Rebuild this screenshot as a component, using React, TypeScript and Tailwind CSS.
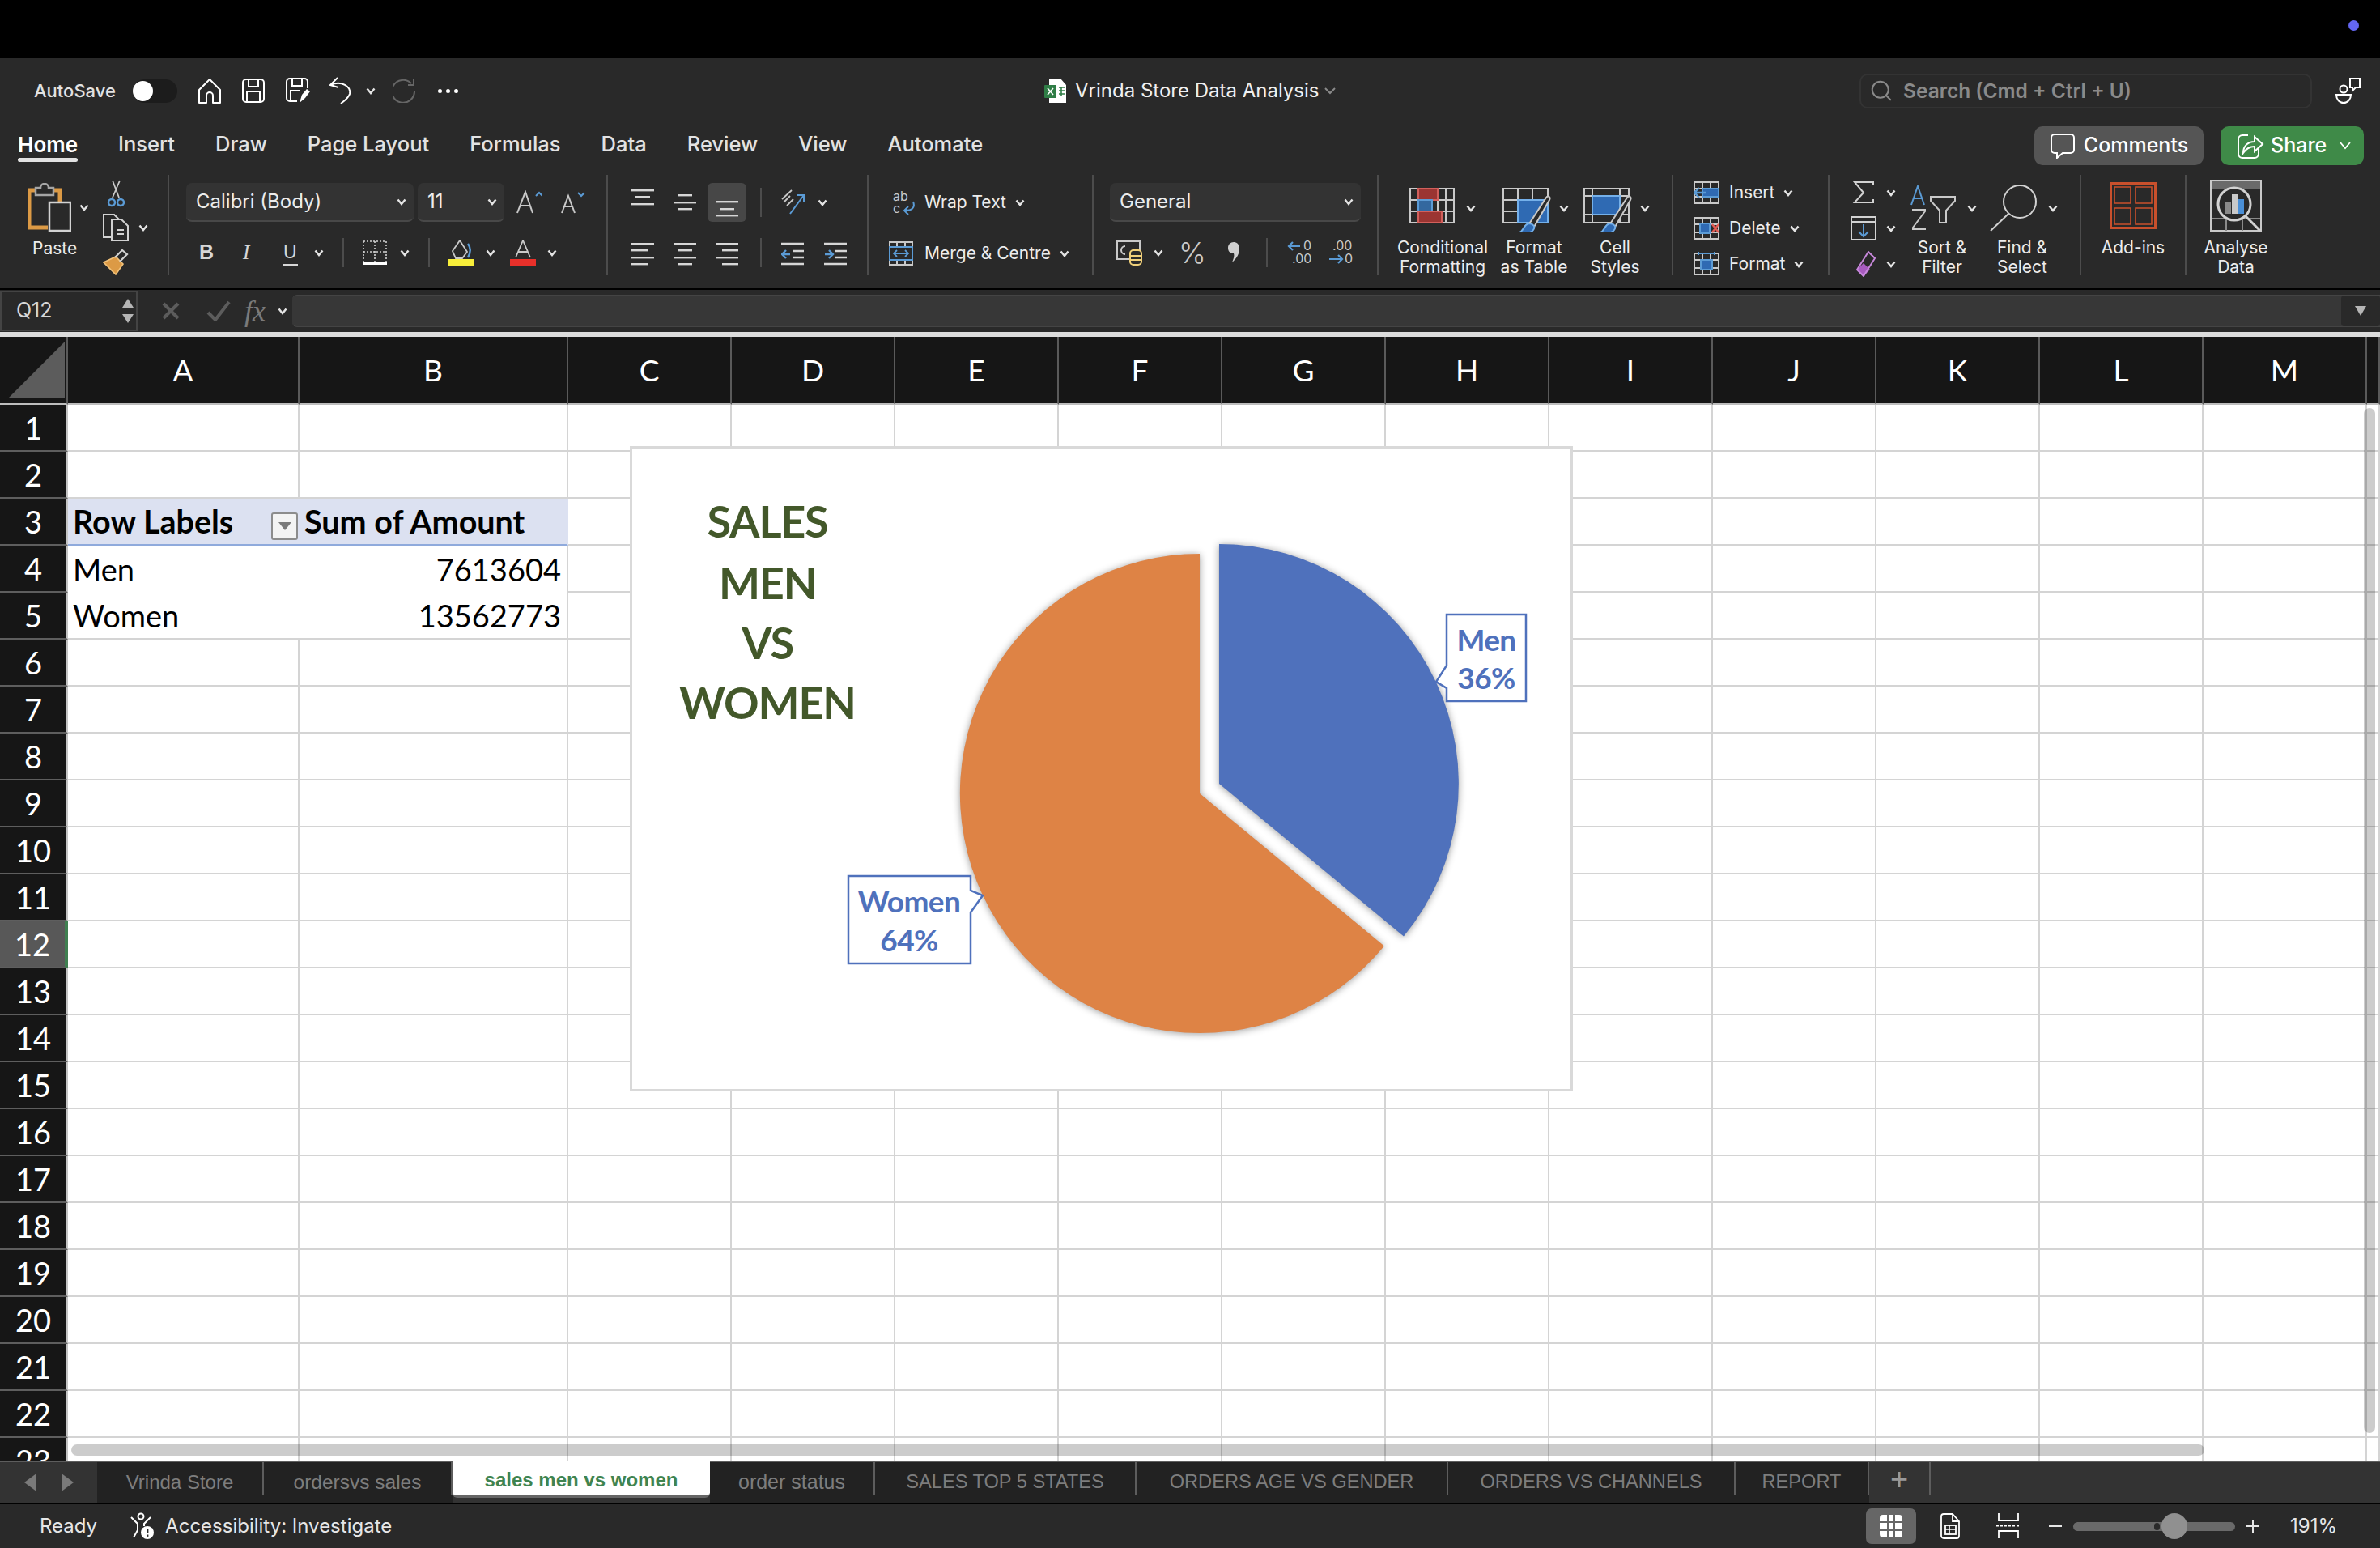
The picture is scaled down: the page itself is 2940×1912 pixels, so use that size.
import React from "react";
import { Search } from "lucide-react";

const COLUMNS = ["A", "B", "C", "D", "E", "F", "G", "H", "I", "J", "K", "L", "M", ""];
const ROWS = Array.from({ length: 23 }, (_, i) => i + 1);

const SHEET_TABS = [
  { name: "Vrinda Store", width: "w-[206px]", size: "text-[24px]" },
  { name: "ordersvs sales", width: "w-[233px]", size: "text-[24.5px]" },
  { name: "sales men vs women", width: "w-[318px]", size: "text-[24px]", active: true },
  { name: "order status", width: "w-[204px]", size: "text-[25px]" },
  { name: "SALES TOP 5 STATES", width: "w-[323px]", size: "text-[23.6px]" },
  { name: "ORDERS AGE VS GENDER", width: "w-[385px]", size: "text-[23.6px]" },
  { name: "ORDERS VS CHANNELS", width: "w-[355px]", size: "text-[23.6px]" },
  { name: "REPORT", width: "w-[165px]", size: "text-[23.6px]" },
];

const RIBBON_TABS = ["Insert", "Draw", "Page Layout", "Formulas", "Data", "Review", "View", "Automate"];

// ── small ribbon helpers ──

function Chev({ className = "" }: { className?: string }) {
  return (
    <svg width="12" height="9" viewBox="0 0 12 9" className={`shrink-0 ${className}`}>
      <path d="M1.5 1.5 6 7l4.5-5.5" fill="none" stroke="#e4e4e4" strokeWidth="2.4" />
    </svg>
  );
}

function Sep({ className = "" }: { className?: string }) {
  return <div className={`w-[2px] h-[36px] bg-[#4c4c4c] shrink-0 ${className}`} />;
}

function Lines({ ys, lens, align, h, className = "" }: { ys: number[]; lens: number[]; align: "l" | "c" | "r"; h: number; className?: string }) {
  return (
    <svg width="28" height={h} viewBox={`0 0 28 ${h}`} className={`shrink-0 ${className}`}>
      {ys.map((y, i) => {
        const x = align === "l" ? 0 : align === "c" ? (28 - lens[i]) / 2 : 28 - lens[i];
        return <rect key={i} x={x} y={y} width={lens[i]} height="2.4" fill="#d6d6d6" />;
      })}
    </svg>
  );
}

function MiniGrid({ children }: { children: React.ReactNode }) {
  return (
    <svg width="32" height="30" viewBox="0 0 32 30" className="shrink-0">
      <g fill="none" stroke="#c9c9c9" strokeWidth="2">
        <rect x="1" y="2" width="30" height="26" />
        <path d="M11 2v26M21 2v26M1 10h30M1 20h30" />
      </g>
      {children}
    </svg>
  );
}

function Brush() {
  return (
    <g>
      <path d="M32 46 54 12c2-3 6-1 4 3L38 50z" fill="#292929" stroke="#c9c9c9" strokeWidth="2" />
      <path d="M32 44c6 0 9 4 6 8-3 4-10 5-17 3 5-2 5-9 11-11z" fill="#2f6ab3" stroke="#74b0ea" strokeWidth="2" />
    </g>
  );
}

function RibbonLabel({ lines }: { lines: string[] }) {
  return (
    <div className="mt-[8px] text-center text-[21px] leading-[24px] text-[#ececec]">
      {lines.map((l) => (
        <div key={l}>{l}</div>
      ))}
    </div>
  );
}

// ── the pie chart floats over the cells ──

function SalesChart() {
  return (
    <div className="absolute left-[778px] top-[135px] w-[1165px] h-[797px] bg-white border-[3px] border-[#d9d9d9]">
      <svg viewBox="781 554 1159 791" className="w-full h-full block [font-family:Lato,sans-serif] font-bold">
        <g fontSize="54" fill="#43582a" textAnchor="middle" letterSpacing="-1.2">
          <text x="948" y="664">SALES</text>
          <text x="948" y="740">MEN</text>
          <text x="948" y="814">VS</text>
          <text x="948" y="888">WOMEN</text>
        </g>
        <path d="M1482 980 1710 1168.6A296 296 0 1 1 1482 684Z" fill="#de8345" className="drop-shadow-[0_1px_5px_rgba(0,0,0,0.4)]" />
        <path d="M1506 968V672A296 296 0 0 1 1734 1156.6Z" fill="#4f71bc" className="drop-shadow-[0_1px_5px_rgba(0,0,0,0.4)]" />
        <path d="M1787 759H1885V866H1787V850L1774 842 1787 822Z" fill="#fff" stroke="#4f71bc" strokeWidth="2.5" />
        <path d="M1048 1082H1199V1100L1214 1106 1199 1127V1190H1048Z" fill="#fff" stroke="#4f71bc" strokeWidth="2.5" />
        <g fontSize="37" fill="#4f71bc" textAnchor="middle" letterSpacing="-0.6">
          <text x="1836" y="804">Men</text>
          <text x="1836" y="851">36%</text>
          <text x="1123" y="1127">Women</text>
          <text x="1123" y="1175">64%</text>
        </g>
      </svg>
    </div>
  );
}

function Sheet() {
  return (
    <div className="relative h-[1388px] overflow-hidden bg-white [font-family:Lato,sans-serif]">
      <div className="grid grid-cols-[84px_286px_332px_repeat(11,202px)_16px] grid-rows-[84px] auto-rows-[58px]">
        {/* column header row */}
        <div className="bg-[#161616] border-b-[2px] border-[#bdbdbd] border-r-[2px] border-r-[#5a5a5a] flex items-end justify-end pr-[2px] pb-[6px]">
          <div className="w-[70px] h-[70px] bg-[#5c5c5c] [clip-path:polygon(100%_0,100%_100%,0_100%)]" />
        </div>
        {COLUMNS.map((c) => (
          <div key={c} className="bg-[#161616] border-b-[2px] border-[#bdbdbd] border-r-[2px] border-r-[#5a5a5a] flex items-center justify-center text-[37px] text-white">
            {c}
          </div>
        ))}
        {/* data rows */}
        {ROWS.map((r) => (
          <React.Fragment key={r}>
            <div className={`flex items-center justify-center text-[38px] text-white border-b-[2px] border-[#5e5e5e] ${r === 12 ? "bg-[#585858] border-r-[4px] border-r-[#3f7f50]" : "bg-[#161616] border-r-[2px] border-r-[#c4c4c4]"}`}>
              {r}
            </div>
            {COLUMNS.map((c, i) => {
              if (r === 3 && i < 2) {
                return i === 0 ? (
                  <div key={c} className="bg-[#dce1f1] border-b-[2px] border-[#8faadc] flex items-center pl-[6px] text-[39.5px] font-bold text-black">
                    <span className="flex-1">Row Labels</span>
                    <span className="w-[33px] h-[34px] mt-[12px] mr-[2px] bg-[#f3f3f3] border-[2px] border-[#8c8c8c] rounded-[3px] flex items-center justify-center">
                      <span className="w-0 h-0 border-x-[8px] border-x-transparent border-t-[10px] border-t-[#7a7a7a]" />
                    </span>
                  </div>
                ) : (
                  <div key={c} className="bg-[#dce1f1] border-b-[2px] border-r-[2px] border-b-[#8faadc] border-r-[#dce1f1] flex items-center pl-[6px] text-[39.5px] font-bold text-black">
                    Sum of Amount
                  </div>
                );
              }
              if ((r === 4 || r === 5) && i < 2) {
                const val = r === 4 ? ["Men", "7613604"] : ["Women", "13562773"];
                return (
                  <div key={c} className={`flex items-center text-[38px] text-black ${r === 5 ? "border-b-[2px] border-[#d4d4d4]" : ""} ${i === 0 ? "pl-[6px]" : "justify-end pr-[7px] border-r-[2px] border-[#d4d4d4]"}`}>
                    {val[i]}
                  </div>
                );
              }
              return <div key={c} className="border-b-[2px] border-r-[2px] border-[#d4d4d4]" />;
            })}
          </React.Fragment>
        ))}
      </div>

      <SalesChart />

      {/* floating scroll bars */}
      <div className="absolute left-[88px] top-[1368px] w-[2635px] h-[14px] rounded-full bg-black/20" />
      <div className="absolute left-[2920px] top-[88px] w-[14px] h-[1266px] rounded-full bg-black/20" />
    </div>
  );
}

function Ribbon() {
  return (
    <div className="flex h-[124px] mt-[8px]">
      {/* clipboard */}
      <div className="w-[209px] border-r-[2px] border-[#4c4c4c] flex shrink-0">
        <div className="ml-[34px] w-[84px] mt-[10px] flex flex-col">
          <div className="flex items-center">
            <svg width="54" height="60" viewBox="0 0 54 60" className="shrink-0">
              <path d="M12 9H2V55H25" fill="none" stroke="#dc9a45" strokeWidth="5" />
              <path d="M30 9H40V24" fill="none" stroke="#dc9a45" strokeWidth="5" />
              <path d="M10 15V6H16a5 5 0 0 1 10 0h6v9z" fill="#292929" stroke="#a5a5a5" strokeWidth="2.5" />
              <rect x="27" y="24" width="26" height="35" fill="#292929" stroke="#d2d2d2" strokeWidth="2.5" />
            </svg>
            <Chev className="ml-[10px]" />
          </div>
          <div className="mt-[9px] ml-[6px] text-[21px] leading-[24px] text-[#ececec]">Paste</div>
        </div>
        <div className="flex flex-col -mt-[2px]">
          <svg width="32" height="34" viewBox="0 0 32 34" className="ml-[9px] mt-[8px]">
            <path d="M12 1 20 22M21 1 12 22" fill="none" stroke="#c9c9c9" strokeWidth="1.8" />
            <circle cx="11" cy="28" r="4" fill="none" stroke="#5b9bd5" strokeWidth="2.4" />
            <circle cx="22" cy="28" r="4" fill="none" stroke="#5b9bd5" strokeWidth="2.4" />
          </svg>
          <div className="flex items-center ml-[9px] mt-[8px]">
            <svg width="32" height="34" viewBox="0 0 32 34" className="shrink-0">
              <path d="M14 29H1V1h13l7 7v4" fill="none" stroke="#d2d2d2" strokeWidth="2" />
              <path d="M11 7h12l8 8v18H11z" fill="#292929" stroke="#d2d2d2" strokeWidth="2" />
              <path d="M17 20h9M17 25h9" stroke="#d2d2d2" strokeWidth="2" />
            </svg>
            <Chev className="ml-[12px]" />
          </div>
          <svg width="32" height="32" viewBox="0 0 32 32" className="ml-[9px] mt-[10px]">
            <path d="M1 16 16 9l9 9-9 13z" fill="#dc9a45" stroke="#f2c27a" strokeWidth="1.6" />
            <path d="M15 10 24 1l6 5-9 9" fill="none" stroke="#d2d2d2" strokeWidth="2.2" />
          </svg>
        </div>
      </div>

      {/* font */}
      <div className="w-[542px] border-r-[2px] border-[#4c4c4c] flex flex-col shrink-0">
        <div className="flex items-center mt-[10px] h-[48px] ml-[21px]">
          <div className="w-[281px] h-[48px] rounded-[7px] bg-[#333333] border-b-[2px] border-[#484848] flex items-center pl-[12px] pr-[9px] text-[24px] text-[#ececec]">
            <span className="flex-1">Calibri (Body)</span>
            <Chev />
          </div>
          <div className="ml-[5px] w-[107px] h-[48px] rounded-[7px] bg-[#333333] border-b-[2px] border-[#484848] flex items-center pl-[12px] pr-[9px] text-[24px] text-[#ececec]">
            <span className="flex-1">11</span>
            <Chev />
          </div>
          <svg width="32" height="30" viewBox="0 0 32 30" className="ml-[15px] shrink-0">
            <path d="M1 28 11 2l9 26M5 19h12" fill="none" stroke="#c9c9c9" strokeWidth="2" />
            <path d="M24 7l4-4 4 4" fill="none" stroke="#5b9bd5" strokeWidth="2" />
          </svg>
          <svg width="30" height="28" viewBox="0 0 30 28" className="ml-[23px] shrink-0">
            <path d="M1 27 9 6l8 21M4 19h10" fill="none" stroke="#c9c9c9" strokeWidth="2" />
            <path d="M21 2l4 4 4-4" fill="none" stroke="#5b9bd5" strokeWidth="2" />
          </svg>
        </div>
        <div className="flex items-center mt-[20px] h-[36px] text-[#d6d6d6]">
          <span className="ml-[37px] w-[16px] text-[25px] font-semibold [font-family:'Liberation_Sans',sans-serif]">B</span>
          <span className="ml-[38px] w-[12px] text-[25px] italic [font-family:'Liberation_Serif',serif]">I</span>
          <span className="ml-[38px] w-[18px] text-[23px] leading-[30px] border-b-[3px] border-[#d6d6d6] [font-family:'Liberation_Sans',sans-serif]">U</span>
          <Chev className="ml-[20px]" />
          <Sep className="ml-[23px]" />
          <svg width="30" height="30" viewBox="0 0 30 30" className="ml-[23px] shrink-0">
            <path d="M1 1h28v26M1 1v26M15 1v26M1 14h28" fill="none" stroke="#d2d2d2" strokeWidth="1.6" strokeDasharray="2 2" />
            <path d="M0 28.5h30" stroke="#fff" strokeWidth="3" />
          </svg>
          <Chev className="ml-[16px]" />
          <Sep className="ml-[23px]" />
          <svg width="32" height="32" viewBox="0 0 32 32" className="ml-[23px] shrink-0">
            <path d="M5 14 14 1l9 14-6 8H9z" fill="none" stroke="#c9c9c9" strokeWidth="1.8" />
            <path d="M24 5c3 4 4 10 0 17" fill="none" stroke="#5b9bd5" strokeWidth="2.4" />
            <rect y="24" width="32" height="8" fill="#f7ee3a" />
          </svg>
          <Chev className="ml-[14px]" />
          <svg width="32" height="32" viewBox="0 0 32 32" className="ml-[18px] shrink-0">
            <path d="M7 22 16 1l9 21M10 15h12" fill="none" stroke="#c9c9c9" strokeWidth="1.8" />
            <rect y="24" width="32" height="8" fill="#e8302a" />
          </svg>
          <Chev className="ml-[14px]" />
        </div>
      </div>

      {/* alignment */}
      <div className="w-[322px] border-r-[2px] border-[#4c4c4c] flex flex-col shrink-0">
        <div className="flex items-center mt-[10px] h-[48px] ml-[29px]">
          <Lines h={48} ys={[8, 16, 25]} lens={[28, 18, 28]} align="c" />
          <Lines h={48} ys={[14, 23, 31]} lens={[18, 28, 18]} align="c" className="ml-[24px]" />
          <div className="ml-[14px] w-[48px] h-[48px] rounded-[6px] bg-[#474747] flex items-center justify-center">
            <Lines h={48} ys={[22, 31, 39]} lens={[28, 18, 28]} align="c" />
          </div>
          <Sep className="ml-[17px]" />
          <svg width="32" height="32" viewBox="0 0 32 32" className="ml-[23px] shrink-0">
            <path d="M2 12 14 1M4 16 12 8M8 20l8-8" fill="none" stroke="#c9c9c9" strokeWidth="1.8" />
            <path d="M12 30 29 7M21 7h8v8" fill="none" stroke="#5b9bd5" strokeWidth="2" />
          </svg>
          <Chev className="ml-[14px]" />
        </div>
        <div className="flex items-center mt-[20px] h-[36px] ml-[29px]">
          <Lines h={36} ys={[6, 14, 23, 31]} lens={[28, 20, 28, 20]} align="l" />
          <Lines h={36} ys={[6, 14, 23, 31]} lens={[28, 18, 28, 18]} align="c" className="ml-[24px]" />
          <Lines h={36} ys={[6, 14, 23, 31]} lens={[28, 20, 28, 20]} align="r" className="ml-[24px]" />
          <Sep className="ml-[27px]" />
          <svg width="28" height="36" viewBox="0 0 28 36" className="ml-[24px] shrink-0">
            <path d="M0 7h28M14 16h14M14 24h14M0 32h28" stroke="#d6d6d6" strokeWidth="2.4" />
            <path d="M11 20H2M6 15l-5 5 5 5" fill="none" stroke="#5b9bd5" strokeWidth="2.4" />
          </svg>
          <svg width="28" height="36" viewBox="0 0 28 36" className="ml-[25px] shrink-0">
            <path d="M0 7h28M14 16h14M14 24h14M0 32h28" stroke="#d6d6d6" strokeWidth="2.4" />
            <path d="M1 20h9M6 15l5 5-5 5" fill="none" stroke="#5b9bd5" strokeWidth="2.4" />
          </svg>
        </div>
      </div>

      {/* wrap & merge */}
      <div className="w-[278px] border-r-[2px] border-[#4c4c4c] flex flex-col shrink-0 text-[21px] text-[#ececec]">
        <div className="flex items-center mt-[16px] h-[36px] ml-[30px]">
          <svg width="28" height="36" viewBox="0 0 28 36" className="shrink-0">
            <text x="0" y="16" fontSize="16" fill="#c9c9c9">ab</text>
            <text x="0" y="31" fontSize="16" fill="#c9c9c9">c</text>
            <path d="M25 17c3 8-2 11-10 11M19 23l-5 5 5 5" fill="none" stroke="#5b9bd5" strokeWidth="2" />
          </svg>
          <span className="ml-[11px]">Wrap Text</span>
          <Chev className="ml-[11px]" />
        </div>
        <div className="flex items-center mt-[30px] h-[30px] ml-[25px]">
          <svg width="30" height="30" viewBox="0 0 30 30" className="shrink-0">
            <rect x="1" y="1" width="28" height="28" fill="none" stroke="#c9c9c9" strokeWidth="2" />
            <path d="M10 1v6M20 1v6M10 23v6M20 23v6" stroke="#c9c9c9" strokeWidth="2" />
            <rect x="1" y="7" width="28" height="16" fill="#292929" stroke="#5b9bd5" strokeWidth="2" />
            <path d="M6 15h18M10 11l-4 4 4 4M20 11l4 4-4 4" fill="none" stroke="#5b9bd5" strokeWidth="1.8" />
          </svg>
          <span className="ml-[14px]">Merge &amp; Centre</span>
          <Chev className="ml-[11px]" />
        </div>
      </div>

      {/* number */}
      <div className="w-[352px] border-r-[2px] border-[#4c4c4c] flex flex-col shrink-0">
        <div className="ml-[20px] mt-[10px] w-[310px] h-[48px] rounded-[7px] bg-[#333333] border-b-[2px] border-[#484848] flex items-center pl-[12px] pr-[9px] text-[24px] text-[#ececec]">
          <span className="flex-1">General</span>
          <Chev />
        </div>
        <div className="flex items-center mt-[20px] h-[36px] ml-[28px]">
          <svg width="32" height="32" viewBox="0 0 32 32" className="shrink-0">
            <rect x="1" y="2" width="28" height="22" fill="none" stroke="#c9c9c9" strokeWidth="2" />
            <path d="M11 8a5 5 0 1 0 0 10" fill="none" stroke="#c9c9c9" strokeWidth="2" />
            <rect x="17" y="13" width="14" height="18" rx="4" fill="#292929" stroke="#efcf7a" strokeWidth="2" />
            <path d="M17 20h14M17 25h14" stroke="#efcf7a" strokeWidth="2" />
          </svg>
          <Chev className="ml-[14px]" />
          <span className="ml-[19px] w-[30px] text-[36px] font-light text-[#c9c9c9] leading-none">%</span>
          <svg width="16" height="28" viewBox="0 0 16 28" className="ml-[30px] shrink-0">
            <path d="M8 1c5 0 7 4 7 8 0 7-4 13-9 17 2-5 3-8 2-11C3 15 1 12 1 8c0-4 3-7 7-7z" fill="#d0d0d0" />
          </svg>
          <Sep className="ml-[32px]" />
          <svg width="32" height="36" viewBox="0 0 32 36" className="ml-[24px] shrink-0">
            <text x="20" y="15" fontSize="16" fill="#c9c9c9">0</text>
            <text x="6" y="31" fontSize="16" fill="#c9c9c9">.00</text>
            <path d="M16 10H2M7 5 2 10l5 5" fill="none" stroke="#5b9bd5" strokeWidth="2.2" />
          </svg>
          <svg width="32" height="36" viewBox="0 0 32 36" className="ml-[18px] shrink-0">
            <text x="6" y="15" fontSize="16" fill="#c9c9c9">.00</text>
            <text x="21" y="31" fontSize="16" fill="#c9c9c9">0</text>
            <path d="M2 26h16M13 21l5 5-5 5" fill="none" stroke="#5b9bd5" strokeWidth="2.2" />
          </svg>
        </div>
      </div>

      {/* styles */}
      <div className="w-[364px] border-r-[2px] border-[#4c4c4c] flex pl-[20px] shrink-0">
        <div className="w-[118px] mt-[16px]">
          <div className="flex items-center h-[54px] ml-[18px]">
            <svg width="56" height="44" viewBox="0 0 56 44" className="shrink-0 self-start">
              <path d="M1 1h54v42H1zM1 15h54M1 29h54M11 1v42M35 1v42M45 1v42" fill="none" stroke="#c9c9c9" strokeWidth="2" />
              <rect x="11" y="1" width="24" height="14" fill="#9b3532" stroke="#d2605c" strokeWidth="2" />
              <rect x="11" y="15" width="17" height="14" fill="#33689f" stroke="#5b9bd5" strokeWidth="2" />
              <rect x="11" y="29" width="29" height="14" fill="#9b3532" stroke="#d2605c" strokeWidth="2" />
            </svg>
            <Chev className="ml-[14px] -mt-[4px]" />
          </div>
          <RibbonLabel lines={["Conditional", "Formatting"]} />
        </div>
        <div className="w-[108px] mt-[16px]">
          <div className="flex items-center h-[54px] ml-[15px]">
            <svg width="60" height="54" viewBox="0 0 60 54" className="shrink-0">
              <path d="M1 1h55v42H1zM1 15h55M1 29h55M19 1v42M37 1v42" fill="none" stroke="#c9c9c9" strokeWidth="2" />
              <rect x="19" y="15" width="37" height="28" fill="#2f6ab3" stroke="#74b0ea" strokeWidth="2" />
              <Brush />
            </svg>
            <Chev className="ml-[10px] -mt-[4px]" />
          </div>
          <RibbonLabel lines={["Format", "as Table"]} />
        </div>
        <div className="w-[92px] mt-[16px]">
          <div className="flex items-center h-[54px] ml-[7px]">
            <svg width="60" height="54" viewBox="0 0 60 54" className="shrink-0">
              <path d="M1 1h55v42H1zM1 10h55M1 33h55M11 1v42M45 1v42" fill="none" stroke="#c9c9c9" strokeWidth="2" />
              <rect x="11" y="10" width="34" height="23" fill="#2f6ab3" stroke="#74b0ea" strokeWidth="2" />
              <Brush />
            </svg>
            <Chev className="ml-[10px] -mt-[4px]" />
          </div>
          <RibbonLabel lines={["Cell", "Styles"]} />
        </div>
      </div>

      {/* cells */}
      <div className="w-[193px] border-r-[2px] border-[#4c4c4c] flex flex-col shrink-0 text-[21px] text-[#ececec] pl-[25px] pt-[7px] gap-[14px]">
        <div className="flex items-center h-[30px]">
          <MiniGrid>
            <rect x="11" y="10" width="20" height="10" fill="#2f6ab3" stroke="#5b9bd5" strokeWidth="2" />
            <path d="M16 15H2M7 9l-6 6 6 6" fill="none" stroke="#5b9bd5" strokeWidth="2.4" />
          </MiniGrid>
          <span className="ml-[12px]">Insert</span>
          <Chev className="ml-[11px]" />
        </div>
        <div className="flex items-center h-[30px]">
          <MiniGrid>
            <rect x="8" y="9" width="12" height="12" fill="#2f6ab3" stroke="#5b9bd5" strokeWidth="2" />
            <path d="M23 10l8 10M31 10l-8 10" stroke="#e25a52" strokeWidth="2.4" />
          </MiniGrid>
          <span className="ml-[12px]">Delete</span>
          <Chev className="ml-[11px]" />
        </div>
        <div className="flex items-center h-[30px]">
          <MiniGrid>
            <rect x="9" y="10" width="14" height="12" fill="#2f6ab3" stroke="#5b9bd5" strokeWidth="2" />
            <path d="M6 0v4M26 0v4M6 2h20" stroke="#5b9bd5" strokeWidth="2" />
          </MiniGrid>
          <span className="ml-[12px]">Format</span>
          <Chev className="ml-[11px]" />
        </div>
      </div>

      {/* editing */}
      <div className="w-[311px] border-r-[2px] border-[#4c4c4c] flex shrink-0">
        <div className="w-[90px] pl-[26px] pt-[7px] flex flex-col gap-[14px]">
          <div className="flex items-center h-[30px]">
            <svg width="32" height="30" viewBox="0 0 32 30" className="shrink-0">
              <path d="M28 6V2H5l11 13L5 27h23v-4" fill="none" stroke="#d2d2d2" strokeWidth="2" />
            </svg>
            <Chev className="ml-[12px]" />
          </div>
          <div className="flex items-center h-[30px]">
            <svg width="32" height="30" viewBox="0 0 32 30" className="shrink-0">
              <rect x="1" y="1" width="30" height="28" fill="none" stroke="#d2d2d2" strokeWidth="2" />
              <path d="M1 7h30" stroke="#d2d2d2" strokeWidth="2" />
              <path d="M16 10v15M10 19l6 6 6-6" fill="none" stroke="#5b9bd5" strokeWidth="2" />
            </svg>
            <Chev className="ml-[12px]" />
          </div>
          <div className="flex items-center h-[30px]">
            <svg width="32" height="32" viewBox="0 0 32 32" className="shrink-0">
              <path d="M16 15 8 23l8 8 8-8z" fill="#a85bc0" />
              <path d="M22 1 8 23l8 8 14-22z" fill="none" stroke="#c888dc" strokeWidth="2" />
            </svg>
            <Chev className="ml-[12px]" />
          </div>
        </div>
        <div className="w-[98px] mt-[12px]">
          <div className="flex items-center h-[58px] ml-[10px]">
            <svg width="56" height="56" viewBox="0 0 56 56" className="shrink-0">
              <path d="M1 24 9 1l8 23M4 16h10" fill="none" stroke="#5b9bd5" strokeWidth="2" />
              <path d="M2 30h16v2L3 52v2h16" fill="none" stroke="#c9c9c9" strokeWidth="2" />
              <path d="M25 14h30v5L44 31v15h-8V31L25 19z" fill="none" stroke="#c9c9c9" strokeWidth="2" />
            </svg>
            <Chev className="ml-[14px]" />
          </div>
          <RibbonLabel lines={["Sort &", "Filter"]} />
        </div>
        <div className="w-[100px] mt-[12px]">
          <div className="flex items-center h-[58px] ml-[10px]">
            <svg width="58" height="58" viewBox="0 0 58 58" className="shrink-0">
              <ellipse cx="37" cy="21" rx="20" ry="20" fill="none" stroke="#d2d2d2" strokeWidth="2" />
              <path d="M23 36 1 57" stroke="#d2d2d2" strokeWidth="2" />
            </svg>
            <Chev className="ml-[14px]" />
          </div>
          <RibbonLabel lines={["Find &", "Select"]} />
        </div>
      </div>

      {/* add-ins */}
      <div className="w-[130px] border-r-[2px] border-[#4c4c4c] flex flex-col items-center pt-[9px] shrink-0">
        <svg width="58" height="58" viewBox="0 0 58 58" className="shrink-0 mb-[3px]">
          <rect x="1.5" y="1.5" width="55" height="55" fill="none" stroke="#c9502c" strokeWidth="3" />
          <path d="M6 6h20v20H6zM32 6h20v20H32zM6 32h20v20H6zM32 32h20v20H32z" fill="none" stroke="#c9502c" strokeWidth="1.6" />
        </svg>
        <RibbonLabel lines={["Add-ins"]} />
      </div>

      {/* analyse */}
      <div className="w-[122px] flex flex-col items-center pt-[6px] shrink-0">
        <svg width="64" height="64" viewBox="0 0 64 64" className="shrink-0">
          <rect x="1" y="1" width="62" height="62" fill="none" stroke="#c9c9c9" strokeWidth="2" />
          <rect x="2" y="2" width="60" height="10" fill="#6a6a6a" />
          <path d="M2 48h60M20 48v15M40 48v15" stroke="#8a8a8a" strokeWidth="2" />
          <circle cx="30" cy="30" r="20" fill="#292929" stroke="#d2d2d2" strokeWidth="3" />
          <rect x="19" y="28" width="7" height="14" fill="#8a8a8a" />
          <rect x="27" y="18" width="7" height="24" fill="#c9c9c9" />
          <rect x="35" y="24" width="7" height="18" fill="#4a8fd6" />
          <path d="M44 45 62 63" stroke="#d2d2d2" strokeWidth="3" />
        </svg>
        <RibbonLabel lines={["Analyse", "Data"]} />
      </div>
    </div>
  );
}

export default function App() {
  return (
    <div className="w-[2940px] h-[1912px] overflow-hidden bg-black [font-family:Inter,sans-serif]">
      {/* menu bar strip */}
      <div className="h-[72px] flex justify-end items-start pt-[25px] pr-[26px]">
        <div className="w-[13px] h-[13px] rounded-full bg-[#6366f1]" />
      </div>

      <div className="h-[284px] bg-[#292929] flex flex-col">
        {/* title row */}
        <div className="h-[80px] flex items-center">
          <div className="w-[1290px] flex items-center pl-[42px] shrink-0">
            <span className="text-[22px] font-medium text-[#e2e2e2]">AutoSave</span>
            <div className="ml-[21px] w-[55px] h-[29px] rounded-full bg-[#1c1c1c] flex items-center">
              <div className="w-[25px] h-[25px] rounded-full bg-white" />
            </div>
            <svg width="28" height="31" viewBox="0 0 28 31" className="ml-[26px]">
              <path d="M14 1 27 14v16h-9v-9a4 4 0 0 0-8 0v9H1V14z" fill="none" stroke="#fff" strokeWidth="2" strokeLinejoin="round" />
            </svg>
            <svg width="28" height="30" viewBox="0 0 28 30" className="ml-[26px]">
              <path d="M5 1h18a4 4 0 0 1 4 4v20a4 4 0 0 1-4 4H5a4 4 0 0 1-4-4V5a4 4 0 0 1 4-4zM8 1v9h12V1M6 29V16h16v13" fill="none" stroke="#fff" strokeWidth="2" />
            </svg>
            <svg width="30" height="32" viewBox="0 0 30 32" className="ml-[26px]">
              <path d="M14 29H5a4 4 0 0 1-4-4V5a4 4 0 0 1 4-4h18a4 4 0 0 1 4 4v8M8 1v9h12V1M6 27V16h12" fill="none" stroke="#fff" strokeWidth="2" />
              <path d="M17 31l3-10 6-7 4 3-6 8z" fill="#fff" />
            </svg>
            <svg width="30" height="34" viewBox="0 0 30 34" className="ml-[23px]">
              <path d="M11 1 2 10l10 3M2 10c14-6 26 2 24 11-1 4-7 9-11 12" fill="none" stroke="#fff" strokeWidth="2" />
            </svg>
            <Chev className="ml-[16px]" />
            <svg width="30" height="30" viewBox="0 0 30 30" className="ml-[21px]">
              <path d="M23 6a14 14 0 1 0 4 9M26 1v7h-7" fill="none" stroke="#666666" strokeWidth="2" />
            </svg>
            <div className="ml-[26px] flex gap-[5px]">
              <div className="w-[5px] h-[5px] rounded-full bg-white" />
              <div className="w-[5px] h-[5px] rounded-full bg-white" />
              <div className="w-[5px] h-[5px] rounded-full bg-white" />
            </div>
          </div>
          <div className="w-[1007px] flex items-center shrink-0">
            <svg width="27" height="30" viewBox="0 0 27 30">
              <path d="M6 0h14l7 8v22H6z" fill="#fff" />
              <rect x="0" y="8" width="15" height="16" rx="1" fill="#2f7d46" />
              <path d="M4 12l7 8M11 12l-7 8" stroke="#fff" strokeWidth="1.6" />
              <path d="M18 11h7M18 15h7M18 19h7M21 10v11" stroke="#2f7d46" strokeWidth="1.6" />
            </svg>
            <span className="ml-[11px] text-[24px] text-[#f0f0f0]">Vrinda Store Data Analysis</span>
            <svg width="14" height="9" viewBox="0 0 14 9" className="ml-[7px]">
              <path d="M1 1l6 6 6-6" fill="none" stroke="#8a8a8a" strokeWidth="2" />
            </svg>
          </div>
          <div className="w-[559px] h-[43px] rounded-[10px] border-[2px] border-[#333333] flex items-center pl-[10px] shrink-0 text-[24.5px] font-semibold text-[#8a8a8a]">
            <Search size={30} strokeWidth={1.6} />
            <span className="ml-[12px]">Search (Cmd + Ctrl + U)</span>
          </div>
          <svg width="32" height="32" viewBox="0 0 32 32" className="ml-[29px]">
            <circle cx="10" cy="14" r="4.5" fill="none" stroke="#fff" strokeWidth="2" />
            <path d="M1 21h18c0 6-4 10-9 10s-9-4-9-10z" fill="none" stroke="#fff" strokeWidth="2" />
            <path d="M18 1h12v11h-5l-4 4v-4h-3z" fill="none" stroke="#fff" strokeWidth="2" />
          </svg>
        </div>

        {/* ribbon tabs */}
        <div className="h-[56px] flex items-center">
          <div className="flex items-center gap-[50px] pl-[22px] -mt-[3px] text-[25.5px] text-[#e2e2e2]">
            <div className="relative font-semibold text-white text-[26px]">
              Home
              <div className="absolute left-0 right-0 top-[36px] h-[5px] rounded-full bg-[#e2e2e2]" />
            </div>
            {RIBBON_TABS.map((t) => (
              <span key={t} className="font-medium">{t}</span>
            ))}
          </div>
          <div className="ml-auto mr-[20px] flex gap-[21px] text-[25px] font-medium text-white">
            <div className="w-[209px] h-[48px] rounded-[10px] bg-[#555555] flex items-center justify-center gap-[10px]">
              <svg width="32" height="32" viewBox="0 0 32 32">
                <path d="M6 2h20a4 4 0 0 1 4 4v15a4 4 0 0 1-4 4H16l-7 6v-6H6a4 4 0 0 1-4-4V6a4 4 0 0 1 4-4z" fill="none" stroke="#fff" strokeWidth="2" />
              </svg>
              Comments
            </div>
            <div className="w-[177px] h-[48px] rounded-[10px] bg-[#3f8a48] flex items-center pl-[20px]">
              <svg width="34" height="34" viewBox="0 0 34 34">
                <path d="M14 4H7a5 5 0 0 0-5 5v18a5 5 0 0 0 5 5h15a5 5 0 0 0 5-5v-7" fill="none" stroke="#fff" strokeWidth="2" />
                <path d="M8 26c0-9 6-14 14-14V6l10 9-10 9v-6c-6 0-10 2-14 8z" fill="#3f8a48" stroke="#fff" strokeWidth="2" />
              </svg>
              <span className="ml-[8px]">Share</span>
              <svg width="14" height="10" viewBox="0 0 14 10" className="ml-[16px]">
                <path d="M1 1l6 7 6-7" fill="none" stroke="#fff" strokeWidth="1.8" />
              </svg>
            </div>
          </div>
        </div>

        <Ribbon />
      </div>

      {/* formula bar */}
      <div className="mt-[2px] h-[52px] bg-[#292929] flex items-center">
        <div className="w-[170px] h-[50px] border-[2px] border-[#444444] flex items-center pl-[18px] pr-[3px] text-[25px] text-[#d6d6d6] shrink-0">
          <span className="flex-1">Q12</span>
          <div className="flex flex-col gap-[8px]">
            <div className="w-0 h-0 border-x-[7px] border-x-transparent border-b-[11px] border-b-[#b5b5b5]" />
            <div className="w-0 h-0 border-x-[7px] border-x-transparent border-t-[11px] border-t-[#b5b5b5]" />
          </div>
        </div>
        <svg width="22" height="22" viewBox="0 0 22 22" className="ml-[30px] shrink-0">
          <path d="M2 2l18 18M20 2 2 20" stroke="#5c5c5c" strokeWidth="4" />
        </svg>
        <svg width="30" height="26" viewBox="0 0 30 26" className="ml-[33px] shrink-0">
          <path d="M2 15l9 9L28 2" fill="none" stroke="#5c5c5c" strokeWidth="4" />
        </svg>
        <span className="ml-[17px] w-[32px] text-[36px] italic text-[#7a7a7a] [font-family:'Liberation_Serif',serif]">fx</span>
        <Chev className="ml-[9px]" />
        <div className="ml-[6px] flex-1 h-[40px] bg-[#373737] border-y-[1px] border-[#444444] rounded-l-[6px] flex justify-end">
          <div className="w-[48px] h-full bg-[#292929] rounded-[4px] flex items-center justify-center">
            <div className="w-0 h-0 border-x-[7px] border-x-transparent border-t-[12px] border-t-[#b5b5b5]" />
          </div>
        </div>
      </div>

      <div className="h-[6px] bg-[#dcdcdc]" />

      <Sheet />

      {/* sheet tabs */}
      <div className="h-[52px] bg-[#333333] border-t-[2px] border-[#5d5d5d] flex text-[#7d7d7d] [font-family:'Liberation_Sans',sans-serif]">
        <div className="w-[120px] flex items-center pl-[30px] gap-[31px] shrink-0">
          <div className="w-0 h-0 border-y-[11px] border-y-transparent border-r-[15px] border-r-[#7a7a7a]" />
          <div className="w-0 h-0 border-y-[11px] border-y-transparent border-l-[15px] border-l-[#7a7a7a]" />
        </div>
        {SHEET_TABS.map((t) =>
          t.active ? (
            <div key={t.name} className={`${t.width} ${t.size} -mt-[2px] h-[46px] pt-[5px] bg-white rounded-b-[6px] border-b-[3px] border-[#666666] flex items-center justify-center font-bold text-[#3f8450]`}>
              {t.name}
            </div>
          ) : (
            <div key={t.name} className={`${t.width} ${t.size} bg-[#222222] flex items-center justify-center`}>
              <span className="flex-1 text-center">{t.name}</span>
              <span className="w-[2px] h-[40px] mb-[10px] bg-[#5d5d5d]" />
            </div>
          ),
        )}
        <div className="w-[76px] flex items-start">
          <span className="flex-1 text-center text-[38px] leading-[42px] text-[#9a9a9a]">+</span>
          <span className="w-[2px] h-[40px] bg-[#5d5d5d]" />
        </div>
      </div>

      {/* status bar */}
      <div className="mt-[2px] h-[54px] bg-[#292929] flex items-center text-[24px] text-[#e6e6e6]">
        <span className="ml-[49px]">Ready</span>
        <svg width="32" height="34" viewBox="0 0 32 34" className="ml-[39px] shrink-0">
          <circle cx="15" cy="5" r="3.5" fill="none" stroke="#fff" strokeWidth="2" />
          <path d="M3 6l8 8v8l-5 9M27 6l-8 8v3" fill="none" stroke="#fff" strokeWidth="2" />
          <circle cx="23" cy="25" r="8" fill="#fff" />
          <rect x="22" y="20" width="2.4" height="6" fill="#292929" />
          <rect x="22" y="27.5" width="2.4" height="2.4" fill="#292929" />
        </svg>
        <span className="ml-[13px]">Accessibility: Investigate</span>

        <div className="ml-auto flex items-center">
          <div className="w-[62px] h-[44px] rounded-[7px] bg-[#666666] flex items-center justify-center">
            <svg width="28" height="28" viewBox="0 0 28 28">
              <path d="M4 0h5v8H0V4a4 4 0 0 1 4-4zM11 0h6v8h-6zM19 0h5a4 4 0 0 1 4 4v4h-9zM0 10h9v8H0zM11 10h6v8h-6zM19 10h9v8h-9zM0 20h9v8H4a4 4 0 0 1-4-4zM11 20h6v8h-6zM19 20h9v4a4 4 0 0 1-4 4h-5z" fill="#fff" />
            </svg>
          </div>
          <svg width="24" height="32" viewBox="0 0 24 32" className="ml-[30px]">
            <path d="M4 1h11l8 9v18a3 3 0 0 1-3 3H4a3 3 0 0 1-3-3V4a3 3 0 0 1 3-3zM15 1v9h8" fill="none" stroke="#fff" strokeWidth="1.8" />
            <rect x="6" y="15" width="13" height="11" fill="none" stroke="#fff" strokeWidth="1.8" />
            <path d="M6 20h13M11 15v11" stroke="#fff" strokeWidth="1.6" />
          </svg>
          <svg width="30" height="32" viewBox="0 0 30 32" className="ml-[45px]">
            <path d="M3 0v9h24V0M3 31V22h24v9" fill="none" stroke="#fff" strokeWidth="1.8" />
            <path d="M0 15.5h30" stroke="#fff" strokeWidth="2" strokeDasharray="3 2" />
          </svg>
          <div className="ml-[35px] w-[16px] h-[2px] bg-[#e6e6e6]" />
          <div className="ml-[14px] relative w-[200px] h-[11px] rounded-full bg-[#6a6a6a]">
            <div className="absolute left-[100px] top-[1px] w-[7px] h-[9px] rounded-full bg-[#2a2a2a]" />
            <div className="absolute left-[109px] -top-[11px] w-[32px] h-[32px] rounded-full bg-[#909090]" />
          </div>
          <div className="ml-[14px] relative w-[16px] h-[16px]">
            <div className="absolute left-0 top-[7px] w-[16px] h-[2px] bg-[#e6e6e6]" />
            <div className="absolute left-[7px] top-0 w-[2px] h-[16px] bg-[#e6e6e6]" />
          </div>
          <span className="ml-[38px] mr-[53px]">191%</span>
        </div>
      </div>
    </div>
  );
}
